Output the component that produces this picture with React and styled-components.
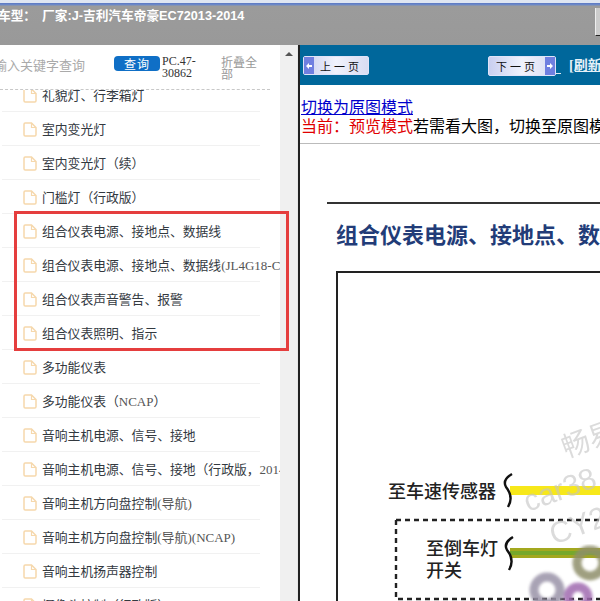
import React from 'react'
import styled, {createGlobalStyle} from 'styled-components'

const Global = createGlobalStyle`
    html, body {
        margin: 0;
        padding: 0;
        background: #fff;
    }
    * {
        box-sizing: border-box;
    }
`

const Page = styled.div`
    position: relative;
    width: 600px;
    height: 601px;
    overflow: hidden;
    display: flex;
    flex-direction: column;
    font-family: "Liberation Serif", "Noto Sans CJK SC", serif;
`

const TopBar = styled.div`
    height: 45px;
    flex: none;
    background: linear-gradient(#dfe6f2 0, #dfe6f2 3px, #5b78c4 3px, #6f8cc8 5px, #9b9b9b 6px, #999 100%);
    color: #fff;
    font: bold 12.7px "Liberation Sans", "Noto Sans CJK SC", sans-serif;
    padding-top: 5px;
    margin-left: -2px;
    white-space: nowrap;
    .gap {
        margin-left: 6px;
    }
`

const TopButton = styled.div`
    position: absolute;
    top: 8px;
    left: 595px;
    width: 10px;
    height: 28px;
    background: #ccc;
    border-left: 1px solid #eee;
    border-bottom: 1px solid #222;
`

const Body = styled.div`
    flex: 1;
    display: flex;
    min-height: 0;
`

const Sidebar = styled.div`
    width: 280px;
    flex: none;
    display: flex;
    flex-direction: column;
    overflow: hidden;
    background: #fff;
`

const SearchRow = styled.div`
    height: 45px;
    flex: none;
    display: flex;
    align-items: flex-start;
    border-bottom: 1px dashed #c8c8c8;
    margin-right: 10px;
    padding-top: 10px;
`

const SearchHint = styled.div`
    width: 120px;
    margin-left: -6px;
    flex: none;
    padding: 2px 0 0 0;
    font: 13px/16px "Noto Sans CJK SC", sans-serif;
    color: #aaa;
    white-space: nowrap;
`

const QueryButton = styled.div`
    width: 46px;
    height: 15px;
    margin-top: 1px;
    flex: none;
    background: #0f6fc6;
    border-radius: 4px;
    color: #fff;
    font: 12px/15px "Noto Sans CJK SC", sans-serif;
    letter-spacing: 1px;
    text-align: center;
`

const Code = styled.div`
    width: 44px;
    flex: none;
    margin-left: 2px;
    font-size: 12px;
    line-height: 12px;
    color: #333;
`

const Collapse = styled.div`
    width: 38px;
    margin-left: 15px;
    margin-top: 1px;
    flex: none;
    font: 12px/12px "Noto Sans CJK SC", sans-serif;
    color: #999;
`

const TreeList = styled.div`
    flex: 1;
    min-height: 0;
    overflow: hidden;
`

const Row = styled.div`
    display: flex;
    align-items: center;
    height: 34px;
    width: 280px;
    padding-left: 23px;
    position: relative;
    white-space: nowrap;
    overflow: hidden;

    &:first-child {
        margin-top: -12px;
    }

    &::after {
        content: '';
        position: absolute;
        left: 2px;
        bottom: 0;
        width: 258px;
        height: 1px;
        background: #f1f1f1;
    }

    svg {
        flex: none;
    }
`

const RowText = styled.span`
    margin: 0 0 2px 5px;
    font-family: "Noto Sans CJK SC", sans-serif;
    color: #33393f;
    font-size: 12.8px;
    span {
        font-family: "Liberation Serif", "Noto Sans CJK SC", serif;
        font-size: 13px;
        color: #555;
    }
`

const Scrollbar = styled.div`
    width: 17px;
    flex: none;
    background: #f0f0f0;
    display: flex;
    justify-content: center;
    padding-top: 7px;
`

const ScrollArrow = styled.div`
    width: 0;
    height: 0;
    border-left: 4px solid transparent;
    border-right: 4px solid transparent;
    border-bottom: 4px solid #555;
`

const Splitter = styled.div`
    width: 3px;
    flex: none;
    background: linear-gradient(90deg, #e8e8e8 0, #e8e8e8 1px, #222 1px, #222 100%);
`

const Content = styled.div`
    flex: 1;
    min-width: 0;
    overflow: hidden;
    display: flex;
    flex-direction: column;
    background: #fff;
`

const NavBar = styled.div`
    height: 40px;
    flex: none;
    background: #00679b;
    display: flex;
    align-items: flex-start;
    padding: 11px 0 0 3px;
    white-space: nowrap;
`

const PageButton = styled.div`
    width: ${props => props.$next ? '68px' : '66px'};
    height: ${props => props.$next ? '20px' : '19px'};
    margin-left: ${props => props.$next ? '119px' : '0'};
    flex: none;
    display: flex;
    flex-direction: ${props => props.$next ? 'row-reverse' : 'row'};
    align-items: center;
    background: linear-gradient(90deg, #c9cff0, #f0f2fc 50%, #d8dcf2);
    border: 1px solid #dfe3f8;
    border-radius: 2px;
    font: 11px "Noto Sans CJK SC", sans-serif;
    color: #111;
`

const ArrowBox = styled.div`
    width: 10px;
    height: 100%;
    flex: none;
    background: #6f7fe0;
    color: #fff;
    display: flex;
    align-items: center;
    justify-content: center;
`

const PageLabel = styled.span`
    flex: 1;
    text-align: center;
    letter-spacing: 3px;
`

const LinkGap = styled.div`
    width: 5px;
    height: 1px;
    flex: none;
    margin-top: 17px;
    background: #dfe9f3;
`

const Refresh = styled.a`
    margin-left: 8px;
    margin-top: -2px;
    color: #e6f1f8;
    font: bold 14px "Liberation Serif", "Noto Sans CJK SC", serif;
    text-decoration: underline;
`

const ModeBlock = styled.div`
    flex: none;
    height: 59px;
    padding: 12px 0 0 1px;
    font: 16px/19px "Noto Sans CJK SC", sans-serif;
    white-space: nowrap;
    border-bottom: 1px solid #bbb;
`

const ModeLink = styled.a`
    color: #0000cc;
    text-decoration: underline;
    display: block;
`

const Red = styled.span`
    color: #e00000;
`

const Picture = styled.svg`
    display: block;
    flex: none;
`

const Highlight = styled.div`
    position: absolute;
    left: 14px;
    top: 211px;
    width: 275px;
    height: 140px;
    border: 3px solid #e53e3e;
    pointer-events: none;
`

const FileIcon = () => (
    <svg width="14" height="15" viewBox="0 0 14 15">
        <path d="M1 2.2 Q1 1 2.2 1 H8.5 L13 5.5 V12.8 Q13 14 11.8 14 H2.2 Q1 14 1 12.8 Z" fill="#fff" stroke="#f6d8ac" strokeWidth="1.5"/>
        <path d="M8.5 1 V5.5 H13" fill="none" stroke="#f6d8ac" strokeWidth="1.2"/>
    </svg>
)

const rows = [
    ['礼貌灯、行李箱灯'],
    ['室内变光灯'],
    ['室内变光灯（续）'],
    ['门槛灯（行政版）'],
    ['组合仪表电源、接地点、数据线'],
    ['组合仪表电源、接地点、数据线', '(JL4G18-CVVT)'],
    ['组合仪表声音警告、报警'],
    ['组合仪表照明、指示'],
    ['多功能仪表'],
    ['多功能仪表（', 'NCAP', '）'],
    ['音响主机电源、信号、接地'],
    ['音响主机电源、信号、接地（行政版，', '2014)'],
    ['音响主机方向盘控制', '(导航)'],
    ['音响主机方向盘控制', '(导航)(NCAP)'],
    ['音响主机扬声器控制'],
    ['摄像头控制（行政版）'],
]

const labelFont = {fontFamily: 'Noto Sans CJK SC', fontWeight: 500, fontSize: 18, fill: '#222'}

const DiagramPicture = () => (
    <Picture width="300" height="457" viewBox="300 144 300 457">
        <defs>
            <filter id="soft"><feGaussianBlur stdDeviation="1.5"/></filter>
        </defs>
        <rect x="327" y="202" width="273" height="2" fill="#333"/>
        <text x="336" y="243" fontFamily="Noto Sans CJK SC" fontWeight="700" fontSize="22" fill="#223c78">组合仪表电源、接地点、数据线</text>
        <rect x="337" y="271" width="263" height="2" fill="#222"/>
        <rect x="336" y="271" width="2" height="330" fill="#222"/>

        <text x="388" y="498" {...labelFont}>至车速传感器</text>
        <rect x="510" y="486" width="90" height="9" fill="#f7e81a"/>
        <path d="M512 474 Q502 480 506 487 Q514 497 508 507" fill="none" stroke="#111" strokeWidth="2.4"/>

        <path d="M396 520 H600 M396 520 V599 H600" fill="none" stroke="#222" strokeWidth="2.4" strokeDasharray="5 4"/>
        <text x="426" y="555" {...labelFont}>至倒车灯</text>
        <text x="426" y="577" {...labelFont}>开关</text>
        <rect x="510" y="548" width="90" height="10" fill="#a3a81e"/>
        <rect x="510" y="551" width="90" height="4" fill="#76a82b"/>
        <path d="M513 537 Q503 543 507 550 Q515 560 509 570" fill="none" stroke="#111" strokeWidth="2.4"/>

        <g fill="none" strokeWidth="9" filter="url(#soft)" opacity="0.85">
            <circle cx="590" cy="563" r="13" stroke="#8f8f6a"/>
            <circle cx="547" cy="590" r="13" stroke="#9a93a8"/>
            <circle cx="578" cy="597" r="10" stroke="#a06ab0"/>
        </g>

        <g fontFamily="Liberation Sans" fontSize="30" fill="#c4c4c4" opacity="0.6">
            <text x="566" y="458" fontFamily="Noto Sans CJK SC" fontSize="28" transform="rotate(-20 566 458)">畅易</text>
            <text x="528" y="512" transform="rotate(-20 528 512)">car38</text>
            <text x="554" y="545" transform="rotate(-20 554 545)">CY2</text>
        </g>
    </Picture>
)

function App() {
    return (
        <Page>
            <Global/>
            <TopBar>车型：<span className="gap">厂家:J-吉利汽车帝豪EC72013-2014</span></TopBar>
            <TopButton/>
            <Body>
                <Sidebar>
                    <SearchRow>
                        <SearchHint>输入关键字查询</SearchHint>
                        <QueryButton>查询</QueryButton>
                        <Code>PC.47-30862</Code>
                        <Collapse>折叠全部</Collapse>
                    </SearchRow>
                    <TreeList>
                        {rows.map((r, i) => (
                            <Row key={i}>
                                <FileIcon/>
                                <RowText>{r[0]}{r[1] && <span>{r[1]}</span>}{r[2]}</RowText>
                            </Row>
                        ))}
                    </TreeList>
                </Sidebar>
                <Scrollbar><ScrollArrow/></Scrollbar>
                <Splitter/>
                <Content>
                    <NavBar>
                        <PageButton>
                            <ArrowBox><svg width="8" height="8" viewBox="0 0 8 8"><path d="M1 4 L4 1 V3 H7 V5 H4 V7 Z" fill="#fff"/></svg></ArrowBox>
                            <PageLabel>上一页</PageLabel>
                        </PageButton>
                        <PageButton $next>
                            <ArrowBox><svg width="8" height="8" viewBox="0 0 8 8"><path d="M7 4 L4 1 V3 H1 V5 H4 V7 Z" fill="#fff"/></svg></ArrowBox>
                            <PageLabel>下一页</PageLabel>
                        </PageButton>
                        <LinkGap/>
                        <Refresh>[刷新本页]</Refresh>
                    </NavBar>
                    <ModeBlock>
                        <ModeLink>切换为原图模式</ModeLink>
                        <Red>当前：预览模式</Red>若需看大图，切换至原图模式
                    </ModeBlock>
                    <DiagramPicture/>
                </Content>
            </Body>
            <Highlight/>
        </Page>
    )
}

export default App
